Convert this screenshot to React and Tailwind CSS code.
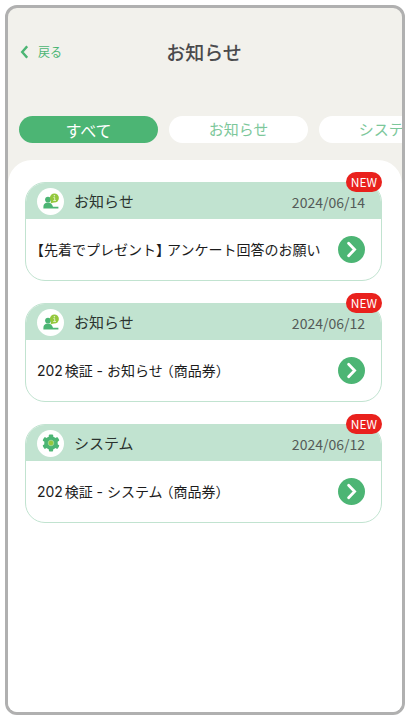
const tabs = ["すべて", "お知らせ", "システム"];

const notices = [
    {
        id: 1,
        type: "お知らせ",
        date: "2024/06/14",
        title: "【先着でプレゼント】 アンケート回答のお願い",
    },
    {
        id: 2,
        type: "お知らせ",
        date: "2024/06/12",
        title: "202検証 - お知らせ （商品券）",
    },
    {
        id: 3,
        type: "システム",
        date: "2024/06/12",
        title: "202検証 - システム （商品券）",
    },
];

function BackIcon() {
    return (
        <svg viewBox="0 0 8 14" className="w-2 h-3.5" aria-hidden="true">
            <path
                d="M7.2 1.4L2.2 7l5 5.6"
                fill="none"
                stroke="#4cb574"
                strokeWidth="2.4"
            />
        </svg>
    );
}

function ArrowIcon() {
    return (
        <svg viewBox="0 0 27 27" className="size-[27px] shrink-0" aria-hidden="true">
            <circle cx="13.5" cy="13.5" r="13.5" fill="#4cb574" />
            <path
                d="M10.6 7.2l6 6.3-6 6.3"
                fill="none"
                stroke="#fff"
                strokeWidth="2.8"
                strokeLinecap="round"
            />
        </svg>
    );
}

function InfoIcon() {
    return (
        <svg viewBox="0 0 16 16" className="size-4" aria-hidden="true">
            <circle cx="5" cy="6.6" r="2.9" fill="#4cb574" />
            <path
                d="M0.4 15.6v-1.8c0-2.6 1.6-4.2 4.6-4.2 2.8 0 4.2 1.6 5 4.2h5.4v1.8z"
                fill="#4cb574"
            />
            <path d="M8.2 7L7.6 10.4l3.4-1.2z" fill="#94c83d" />
            <circle cx="11.4" cy="5" r="4.5" fill="#94c83d" />
            <circle cx="11.4" cy="2.7" r="0.8" fill="#e4f2cc" />
            <path
                d="M10.4 4.6h1.3v3M10.2 7.5h2.8"
                stroke="#e4f2cc"
                strokeWidth="0.9"
                fill="none"
            />
        </svg>
    );
}

function GearIcon() {
    return (
        <svg viewBox="0 0 18 18" className="size-[18px]" aria-hidden="true">
            <g fill="#4cb574">
                <circle cx="9" cy="9" r="6.8" />
                <rect x="6.9" y="0.4" width="4.2" height="17.2" rx="0.8" />
                <rect
                    x="6.9"
                    y="0.4"
                    width="4.2"
                    height="17.2"
                    rx="0.8"
                    transform="rotate(60 9 9)"
                />
                <rect
                    x="6.9"
                    y="0.4"
                    width="4.2"
                    height="17.2"
                    rx="0.8"
                    transform="rotate(120 9 9)"
                />
            </g>
            <circle cx="9" cy="9" r="2.8" fill="#94c83d" stroke="#a9dba0" strokeWidth="0.8" />
        </svg>
    );
}

function NoticeCard({ notice }) {
    return (
        <li className="relative">
            <article className="rounded-[20px] border border-[#c1e3d0] overflow-hidden bg-white">
                <div className="flex items-center h-9 pl-[11px] pr-4 bg-[#c1e3d0]">
                    <span className="flex items-center justify-center size-[27px] rounded-full bg-white">
                        {notice.type === "システム" ? <GearIcon /> : <InfoIcon />}
                    </span>
                    <h2 className="ml-[10px] text-[15px] text-[#2b332f]">{notice.type}</h2>
                    <time className="ml-auto pt-0.5 text-sm text-[#555b58]">
                        {notice.date}
                    </time>
                </div>
                <a
                    href={`#notice-${notice.id}`}
                    className="flex items-center justify-between h-[61px] pl-[11px] pr-4"
                >
                    <span className="text-sm whitespace-nowrap text-[#1c1c1c] font-['Inter','Noto_Sans_CJK_JP',sans-serif] [font-feature-settings:'halt'] [text-autospace:normal]">
                        {notice.title}
                    </span>
                    <ArrowIcon />
                </a>
            </article>
            <span className="absolute -top-2.5 right-0 flex items-center h-5 px-[5px] rounded-full bg-[#e9211d] text-xs text-white">
                NEW
            </span>
        </li>
    );
}

export default function App() {
    return (
        <div className="flex min-h-screen p-[5px] bg-white font-['Noto_Sans_CJK_JP',sans-serif]">
            <main className="flex flex-col flex-1 min-w-0 overflow-hidden rounded-xl border-[3px] border-[#b0b0b0] bg-[#f2f1ec]">
                <header className="grid grid-cols-[1fr_auto_1fr] items-center h-[88px] pl-3 pr-3.5">
                    <button
                        type="button"
                        className="flex items-center gap-[10px] text-xs text-[#4cb574]"
                    >
                        <BackIcon />
                        戻る
                    </button>
                    <h1 className="text-[19px] font-medium text-[#4a4a4c]">お知らせ</h1>
                </header>

                <nav className="flex gap-[11px] pt-5 pl-[11px] pb-[17px] overflow-hidden">
                    {tabs.map((tab, i) => (
                        <button
                            key={tab}
                            type="button"
                            className={
                                i === 0
                                    ? "flex justify-center items-center shrink-0 w-[139px] h-[27px] rounded-full text-base bg-[#4cb574] text-white"
                                    : "flex justify-center items-center shrink-0 w-[139px] h-[27px] rounded-full text-[15px] bg-white text-[#7cc79a]"
                            }
                        >
                            {tab}
                        </button>
                    ))}
                </nav>

                <section className="flex-1 px-5 pt-[22px] pb-6 pl-[17px] rounded-t-3xl bg-white">
                    <ul className="flex flex-col gap-[22px]">
                        {notices.map((notice) => (
                            <NoticeCard key={notice.id} notice={notice} />
                        ))}
                    </ul>
                </section>
            </main>
        </div>
    );
}
